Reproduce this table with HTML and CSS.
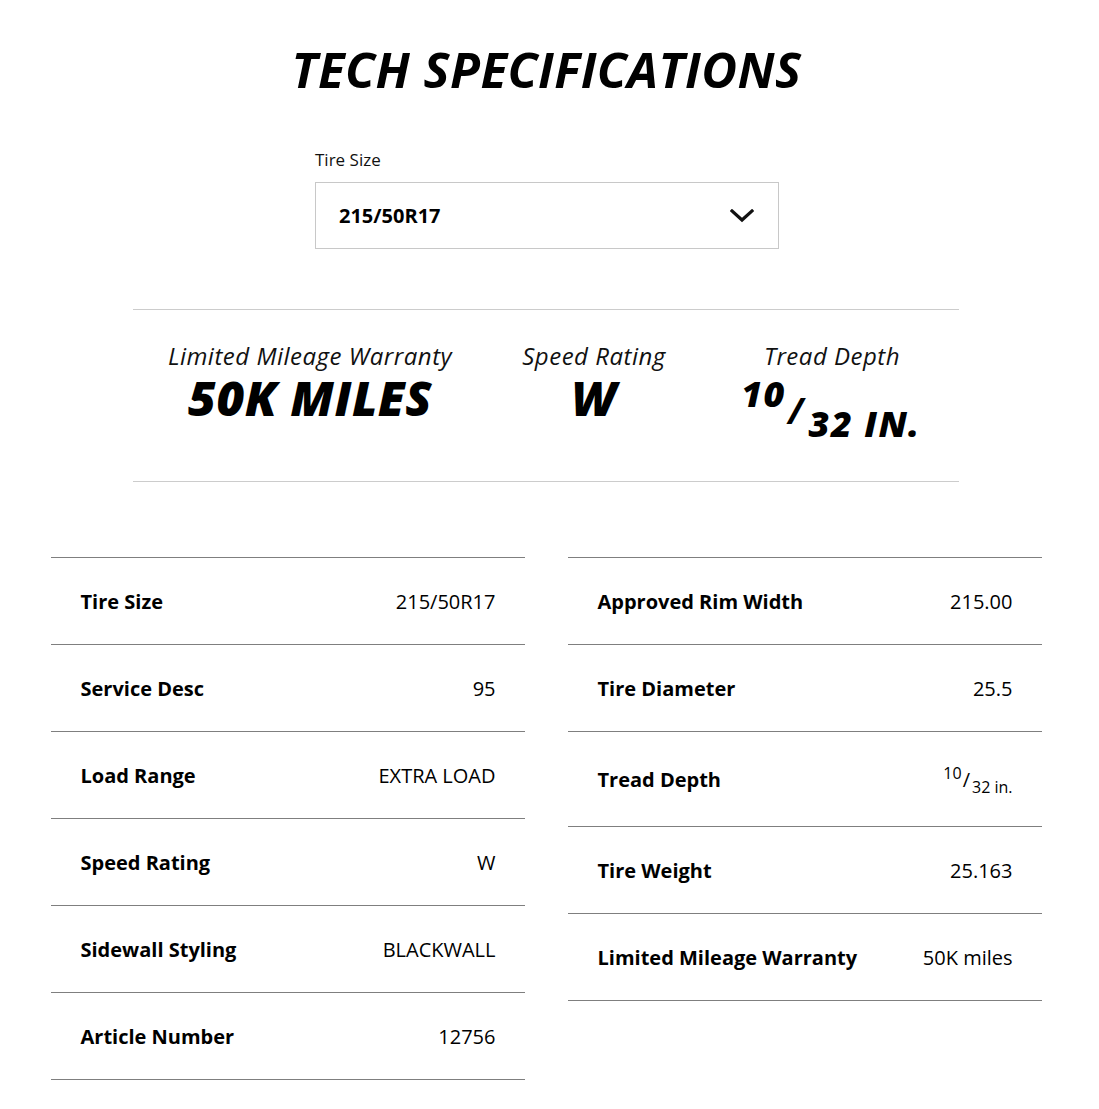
FILE: index.html
```html
<!DOCTYPE html>
<html lang="en">
<head>
<meta charset="utf-8">
<title>Tech Specifications</title>
<link rel="stylesheet" href="styles.css">
</head>
<body>
<main class="page">
  <h1 class="title">TECH SPECIFICATIONS</h1>

  <div class="size-picker">
    <label class="size-label">Tire Size</label>
    <div class="select">
      <span class="select-value">215/50R17</span>
      <svg class="chevron" width="24" height="14" viewBox="0 0 24 14" aria-hidden="true">
        <path d="M2 2 L12 11 L22 2" fill="none" stroke="#111" stroke-width="3.2" stroke-linecap="square"/>
      </svg>
    </div>
  </div>

  <section class="highlights">
    <div class="hl hl-1">
      <div class="hl-label">Limited Mileage Warranty</div>
      <div class="hl-value">50K MILES</div>
    </div>
    <div class="hl hl-2">
      <div class="hl-label">Speed Rating</div>
      <div class="hl-value">W</div>
    </div>
    <div class="hl hl-3">
      <div class="hl-label">Tread Depth</div>
      <div class="hl-value hl-frac"><span class="num">10</span><span class="slash">/</span><span class="den">32 IN.</span></div>
    </div>
  </section>

  <section class="specs">
    <div class="spec-col">
      <div class="row"><span class="k">Tire Size</span><span class="v">215/50R17</span></div>
      <div class="row"><span class="k">Service Desc</span><span class="v">95</span></div>
      <div class="row"><span class="k">Load Range</span><span class="v">EXTRA LOAD</span></div>
      <div class="row"><span class="k">Speed Rating</span><span class="v">W</span></div>
      <div class="row"><span class="k">Sidewall Styling</span><span class="v">BLACKWALL</span></div>
      <div class="row"><span class="k">Article Number</span><span class="v">12756</span></div>
    </div>
    <div class="spec-col">
      <div class="row"><span class="k">Approved Rim Width</span><span class="v">215.00</span></div>
      <div class="row"><span class="k">Tire Diameter</span><span class="v">25.5</span></div>
      <div class="row row-tall"><span class="k">Tread Depth</span><span class="v"><sup>10</sup>/<sub>32 in.</sub></span></div>
      <div class="row"><span class="k">Tire Weight</span><span class="v">25.163</span></div>
      <div class="row"><span class="k">Limited Mileage Warranty</span><span class="v">50K miles</span></div>
    </div>
  </section>
</main>
</body>
</html>
```

FILE: styles.css
```css
* { box-sizing: border-box; }
html, body { margin: 0; padding: 0; background: #fff; }
body {
  font-family: "Open Sans", "Noto Sans", sans-serif;
  color: #111;
}
.page {
  width: 1099px;
  padding-top: 37px;
  display: flex;
  flex-direction: column;
  align-items: center;
}
.title {
  margin: 0;
  font-size: 49px;
  line-height: 64px;
  font-weight: 700;
  font-style: italic;
  letter-spacing: 0.5px;
  color: #000;
  transform: translateX(-3px);
}
.size-picker {
  margin-top: 47px;
  width: 464px;
  margin-left: -5px;
  display: flex;
  flex-direction: column;
}
.size-label {
  font-size: 17px;
  line-height: 24px;
  color: #111;
}
.select {
  margin-top: 10px;
  height: 67px;
  border: 1px solid #c8c8c8;
  display: flex;
  align-items: center;
  justify-content: space-between;
  padding: 0 24px 0 23px;
}
.select-value {
  font-size: 20px;
  font-weight: 700;
  color: #000;
}
.chevron { display: block; margin-top: 1px; }

.highlights {
  margin-top: 60px;
  margin-left: -7px;
  width: 826px;
  height: 173px;
  border-top: 1.5px solid #ccc;
  border-bottom: 1.5px solid #ccc;
  display: grid;
  grid-template-columns: 354px 214px 1fr;
  padding-top: 33px;
}
.hl { text-align: center; }
.hl-label {
  font-style: italic;
  font-size: 24px;
  line-height: 26px;
  letter-spacing: 0.5px;
  color: #111;
}
.hl-value {
  font-style: italic;
  font-weight: 800;
  font-size: 48px;
  line-height: 44px;
  font-stretch: 94%;
  letter-spacing: 0.5px;
  color: #000;
  margin-top: 7px;
}
.hl-3 .hl-label { padding-left: 4px; }
.hl-value.hl-frac {
  display: flex;
  justify-content: center;
  align-items: flex-start;
  font-size: 36px;
  line-height: 36px;
  font-stretch: 100%;
  letter-spacing: 1.5px;
  padding-left: 2px;
  margin-top: 7px;
}
.hl-frac .num { margin-top: 0; }
.hl-frac .slash { margin-top: 17px; margin-left: 2px; font-weight: 700; }
.hl-frac .den { margin-top: 30px; margin-left: 4px; }

.specs {
  margin-top: 75px;
  margin-left: -7px;
  width: 991px;
  display: grid;
  grid-template-columns: 1fr 1fr;
  column-gap: 43px;
  align-items: start;
}
.spec-col {
  border-top: 1px solid #7f7f7f;
}
.row {
  height: 87px;
  border-bottom: 1px solid #7f7f7f;
  display: flex;
  align-items: center;
  justify-content: space-between;
  padding: 0 29px 0 30px;
  font-size: 20px;
  color: #000;
}
.row-tall { height: 95px; }
.k { font-weight: 700; }
.v { font-weight: 400; }
.v sup, .v sub { font-size: 16px; line-height: 0; }
.v sup { vertical-align: 8px; margin-right: 1px; }
.v sub { vertical-align: -6px; margin-left: 2px; }
```
